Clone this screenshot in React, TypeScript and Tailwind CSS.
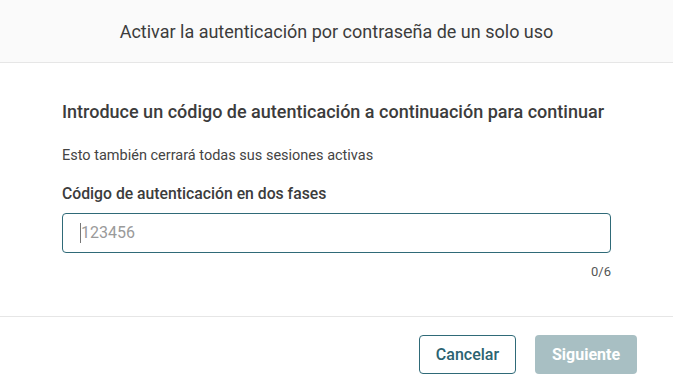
export default function App() {
  return (
    <div className="flex h-[392px] w-[673px] flex-col bg-white font-['Roboto',sans-serif] text-[#3a3a3a]">
      <div className="flex h-[63px] items-center justify-center border-b border-[#e6e6e6] bg-[#fafafa]">
        <h2 className="text-[18px] text-[#3c3c3c]">Activar la autenticación por contraseña de un solo uso</h2>
      </div>
      <div className="flex flex-1 flex-col px-[62px] pt-[37px]">
        <p className="text-[18px] font-medium leading-[24px] text-[#3c3c3c]">
          Introduce un código de autenticación a continuación para continuar
        </p>
        <p className="mt-[22px] text-[14.5px] leading-[20px] text-[#444]">Esto también cerrará todas sus sesiones activas</p>
        <label className="mt-[18px] text-[15.75px] font-medium leading-[20px] text-[#3c3c3c]">Código de autenticación en dos fases</label>
        <div className="mt-[9px] flex h-[40px] w-[549px] items-center rounded-[4px] border border-[#2f6a78] px-[17px]">
          <span className="h-[20px] w-[1px] bg-[#777]" />
          <span className="text-[16px] text-[#9a9a9a]">123456</span>
        </div>
        <div className="mt-[9px] w-[549px] text-right text-[13px] text-[#555]">0/6</div>
      </div>
      <div className="flex h-[76px] items-center justify-end gap-[19px] border-t border-[#e6e6e6] pr-[36px]">
        <button className="h-[39px] w-[97px] rounded-[4px] border border-[#2f6a78] text-[16px] font-medium text-[#2b6371]">
          Cancelar
        </button>
        <button className="h-[39px] w-[102px] rounded-[4px] bg-[#a8bfc3] text-[16px] font-bold text-white">Siguiente</button>
      </div>
    </div>
  )
}
